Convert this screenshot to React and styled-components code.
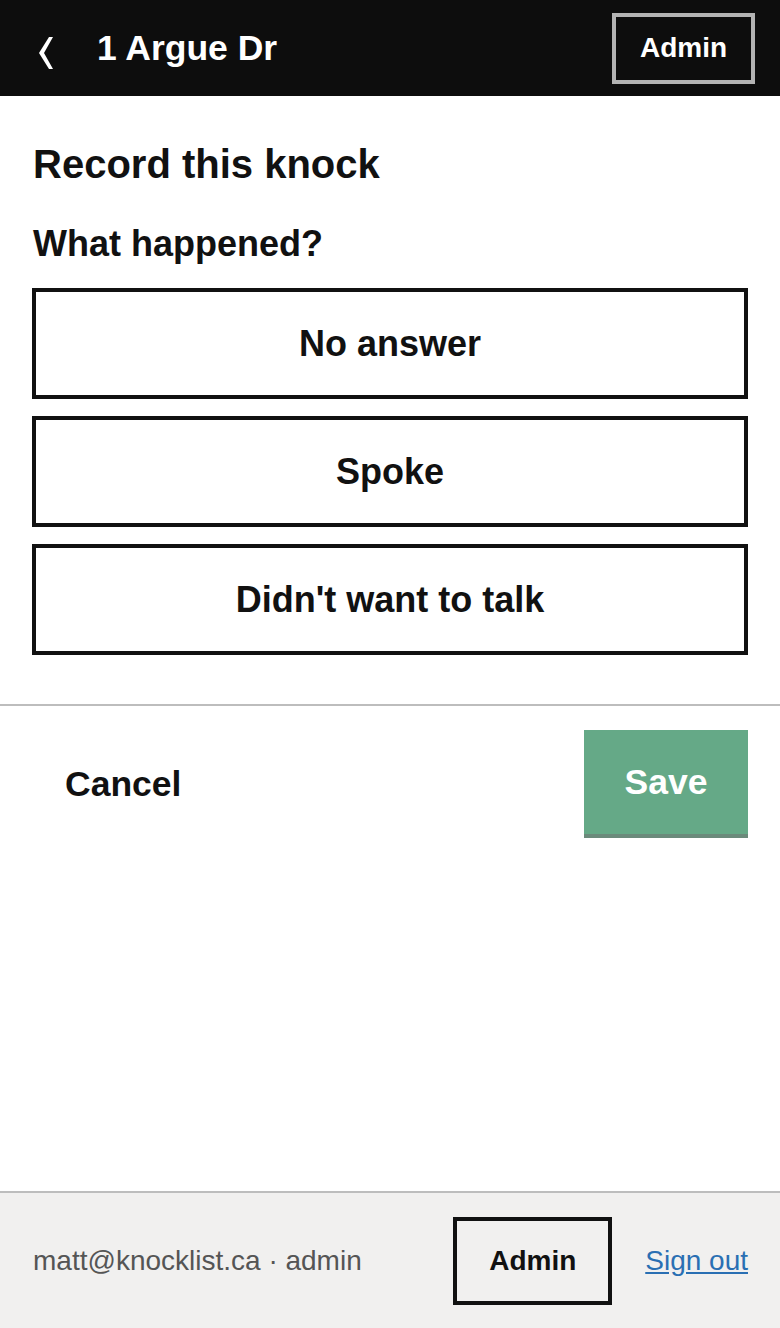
import React from 'react';
import styled, { createGlobalStyle } from 'styled-components';

const GlobalStyle = createGlobalStyle`
  html, body {
    margin: 0;
    padding: 0;
    background: #ffffff;
    font-family: "Liberation Sans", Arial, sans-serif;
  }
  * { box-sizing: border-box; }
`;

const options = ['No answer', 'Spoke', "Didn't want to talk"];

const App = () => {
  return (
    <>
      <GlobalStyle />
      <Page>
        <Header>
          <BackLink aria-label="Back">
            <svg width="20" height="34" viewBox="0 0 20 34">
              <path d="M13 1 L3 17 L13 33 L17 33 L8 17 L17 1 Z" fill="#fff" />
            </svg>
          </BackLink>
          <Title>1 Argue Dr</Title>
          <HeaderButton>Admin</HeaderButton>
        </Header>

        <Main>
          <Heading>Record this knock</Heading>
          <Question>What happened?</Question>
          <Options>
            {options.map((o) => (
              <OptionButton key={o}>{o}</OptionButton>
            ))}
          </Options>
        </Main>

        <Divider />

        <Actions>
          <CancelButton>Cancel</CancelButton>
          <SaveButton>Save</SaveButton>
        </Actions>

        <Footer>
          <UserInfo>matt@knocklist.ca · admin</UserInfo>
          <FooterButton>Admin</FooterButton>
          <SignOut href="#">Sign out</SignOut>
        </Footer>
      </Page>
    </>
  );
};

const Page = styled.div`
  min-height: 100vh;
  display: flex;
  flex-direction: column;
`;

const Header = styled.header`
  height: 96px;
  background: #0d0d0d;
  display: flex;
  align-items: center;
  padding: 0 25px 0 36px;
`;

const BackLink = styled.a`
  display: flex;
  align-items: center;
  width: 20px;
  margin-top: 10px;
  cursor: pointer;
`;

const Title = styled.h1`
  margin: 0 0 0 41px;
  color: #ffffff;
  font-size: 35.5px;
  font-weight: bold;
  flex: 1;
`;

const HeaderButton = styled.button`
  width: 143px;
  height: 71px;
  background: transparent;
  border: 4px solid #b3b3b3;
  color: #ffffff;
  font-family: inherit;
  font-size: 28px;
  font-weight: bold;
  cursor: pointer;
`;

const Main = styled.main`
  padding: 0 32px;
`;

const Heading = styled.h2`
  margin: 45px 0 0 1px;
  font-size: 40px;
  font-weight: bold;
  color: #111;
  line-height: 46px;
`;

const Question = styled.h3`
  margin: 36px 0 0 1px;
  font-size: 36px;
  font-weight: bold;
  color: #111;
  line-height: 42px;
`;

const Options = styled.div`
  display: flex;
  flex-direction: column;
  gap: 17px;
  margin-top: 23px;
`;

const OptionButton = styled.button`
  height: 111px;
  width: 100%;
  background: #ffffff;
  border: 4px solid #111111;
  font-family: inherit;
  font-size: 36px;
  font-weight: bold;
  color: #111;
  cursor: pointer;
`;

const Divider = styled.hr`
  margin: 49px 0 0;
  border: none;
  border-top: 2px solid #bdbdbd;
`;

const Actions = styled.div`
  display: flex;
  justify-content: space-between;
  align-items: center;
  padding: 24px 32px 0 32px;
`;

const CancelButton = styled.button`
  background: transparent;
  border: none;
  padding: 0 33px;
  height: 108px;
  font-family: inherit;
  font-size: 35.5px;
  font-weight: bold;
  color: #111;
  cursor: pointer;
`;

const SaveButton = styled.button`
  width: 164px;
  height: 108px;
  background: #65a987;
  border: none;
  border-bottom: 4px solid #6b8a7b;
  color: #ffffff;
  font-family: inherit;
  font-size: 35.5px;
  font-weight: bold;
  cursor: pointer;
`;

const Footer = styled.footer`
  margin-top: auto;
  height: 137px;
  background: #f1f0ef;
  border-top: 2px solid #bdbdbd;
  display: flex;
  align-items: center;
  padding: 0 32px 0 33px;
`;

const UserInfo = styled.span`
  flex: 1;
  font-size: 28px;
  color: #555555;
`;

const FooterButton = styled.button`
  width: 159px;
  height: 88px;
  background: transparent;
  border: 4px solid #111111;
  font-family: inherit;
  font-size: 28px;
  font-weight: bold;
  color: #111;
  margin-right: 33px;
  cursor: pointer;
`;

const SignOut = styled.a`
  font-size: 28px;
  color: #2a6fb3;
  text-decoration: underline;
`;

export default App;
